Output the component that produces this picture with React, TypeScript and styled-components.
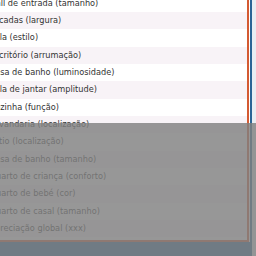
import React from 'react';
import styled, { createGlobalStyle } from 'styled-components';

const GlobalStyle = createGlobalStyle`
  html, body {
    margin: 0;
    padding: 0;
    width: 256px;
    height: 256px;
    overflow: hidden;
    background: #e9edf2;
  }
`;

const Frame = styled.div`
  width: 268px;
  height: 270px;
  margin-left: -16px;
  margin-top: -6px;
  padding-right: 3px;
  background: #2a6496;
  box-sizing: border-box;
`;

const Panel = styled.div`
  padding-top: 0.67px;
  padding-bottom: 2.67px;
  background: #fff;
  border-right: 2px solid #d45a32;
  border-bottom: 2px solid #d45a32;
  box-shadow: 1px 0 0 #fff;
  font-family: 'DejaVu Sans', Verdana, sans-serif;
  font-size: 8.2px;
  color: #333;
`;

const Row = styled.div<{ $odd: boolean }>`
  height: 17.333px;
  line-height: 17.333px;
  padding-left: 5.5px;
  white-space: nowrap;
  background: ${({ $odd }) => ($odd ? '#f8f3f7' : '#fff')};
`;

const Shade = styled.div`
  position: fixed;
  left: 0;
  right: 0;
  top: 123px;
  bottom: 0;
  background: rgba(128, 128, 128, 0.82);
`;

const items = [
  'Hall de entrada (tamanho)',
  'Escadas (largura)',
  'Sala (estilo)',
  'Escritório (arrumação)',
  'Casa de banho (luminosidade)',
  'Sala de jantar (amplitude)',
  'Cozinha (função)',
  'Lavandaria (localização)',
  'Pátio (localização)',
  'Casa de banho (tamanho)',
  'Quarto de criança (conforto)',
  'Quarto de bebé (cor)',
  'Quarto de casal (tamanho)',
  'Apreciação global (xxx)',
];

export default function App() {
  return (
    <>
      <GlobalStyle />
      <Frame>
        <Panel>
          {items.map((t, i) => (
            <Row key={t} $odd={i % 2 === 1}>
              {t}
            </Row>
          ))}
        </Panel>
      </Frame>
      <Shade />
    </>
  );
}
